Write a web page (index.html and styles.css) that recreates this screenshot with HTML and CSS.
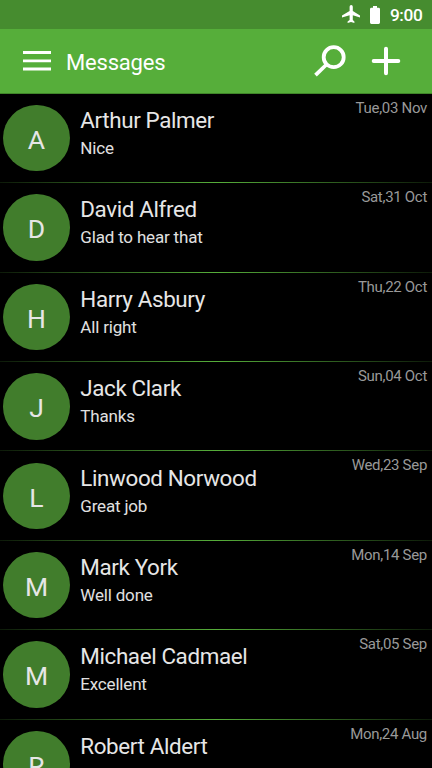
FILE: index.html
```html
<!DOCTYPE html>
<html lang="en">
<head>
<meta charset="utf-8">
<title>Messages</title>
<link rel="stylesheet" href="styles.css">
</head>
<body>
<div class="status">
  <svg class="plane" viewBox="0 0 18 19"><path d="M18 12.4v-1.9l-7.2-4.4V1.700a1.600 1.600 0 0 0-3.200 0v4.400L0 10.500v1.900l7.600-2.200v4.900l-2 1.400v1.600l3.400-1.100 3.400 1.100v-1.600l-1.600-1.400v-4.900z"/></svg>
  <svg class="battery" viewBox="0 0 10 18"><path d="M3 0h4v1.800h1.600Q10 1.800 10 3.200v13.400Q10 18 8.600 18H1.400Q0 18 0 16.600V3.200Q0 1.800 1.400 1.800H3z"/></svg>
  <span class="clock">9:00</span>
</div>
<header class="bar">
  <svg class="menu" viewBox="0 0 28 20"><path d="M0 1.500h28M0 9.800h28M0 18h28"/></svg>
  <h1 class="title">Messages</h1>
  <svg class="search" viewBox="0 0 32 32"><circle cx="19.700" cy="12.200" r="10"/><path d="M12 20 1.500 30.200"/></svg>
  <svg class="plus" viewBox="0 0 30 30"><path d="M15 2.700v24.600M2.700 15h24.600"/></svg>
</header>
<main class="list">
  <article class="row"><div class="avatar">A</div><div class="body"><h2 class="name">Arthur Palmer</h2><p class="text">Nice</p></div><time class="date">Tue,03 Nov</time></article>
  <article class="row"><div class="avatar">D</div><div class="body"><h2 class="name">David Alfred</h2><p class="text">Glad to hear that</p></div><time class="date">Sat,31 Oct</time></article>
  <article class="row"><div class="avatar">H</div><div class="body"><h2 class="name">Harry Asbury</h2><p class="text">All right</p></div><time class="date">Thu,22 Oct</time></article>
  <article class="row"><div class="avatar">J</div><div class="body"><h2 class="name">Jack Clark</h2><p class="text">Thanks</p></div><time class="date">Sun,04 Oct</time></article>
  <article class="row"><div class="avatar">L</div><div class="body"><h2 class="name">Linwood Norwood</h2><p class="text">Great job</p></div><time class="date">Wed,23 Sep</time></article>
  <article class="row"><div class="avatar">M</div><div class="body"><h2 class="name">Mark York</h2><p class="text">Well done</p></div><time class="date">Mon,14 Sep</time></article>
  <article class="row"><div class="avatar">M</div><div class="body"><h2 class="name">Michael Cadmael</h2><p class="text">Excellent</p></div><time class="date">Sat,05 Sep</time></article>
  <article class="row"><div class="avatar">R</div><div class="body"><h2 class="name">Robert Aldert</h2><p class="text">Agree</p></div><time class="date">Mon,24 Aug</time></article>
</main>
</body>
</html>
```
FILE: styles.css
```css
* { box-sizing: border-box; }
body {
  margin: 0;
  height: 768px;
  overflow: hidden;
  display: flex;
  flex-direction: column;
  background: #000;
  font-family: Roboto, sans-serif;
}
h1, h2, p { margin: 0; font-weight: 400; }
.status {
  flex: none;
  height: 29px;
  padding: 0 9.500px 0 0;
  display: flex;
  align-items: center;
  justify-content: flex-end;
  background: #468c2f;
  color: #fff;
}
.plane { width: 18px; height: 19px; fill: #fff; margin-right: 10px; }
.battery { width: 10px; height: 18px; fill: #fff; margin-right: 10px; }
.clock { font-size: 17.300px; font-weight: 500; line-height: 29px; padding-top: 1px; letter-spacing: -0.35px; }
.bar {
  flex: none;
  height: 65px;
  padding: 0 31px 0 23px;
  display: flex;
  align-items: center;
  background: #56ae3a;
  border-bottom: 1px solid #408629;
}
.bar svg { fill: none; stroke: #fff; flex: none; }
.menu { width: 28px; height: 20px; stroke-width: 2.8; }
.title { flex: 1; margin-left: 15px; font-size: 22px; line-height: 30px; padding-top: 3px; letter-spacing: -0.2px; color: #fff; }
.search { width: 32px; height: 32px; stroke-width: 3.8; margin-right: 25.500px; }
.plus { width: 30px; height: 30px; stroke-width: 4; stroke-linecap: round; }
.list { flex: 1; min-height: 0; overflow: hidden; }
.row {
  height: 89.4px;
  display: flex;
  align-items: flex-start;
  padding: 11px 5px 0 3.300px;
  background: linear-gradient(90deg, #0d1a09, #56ae3a 50%, #0d1a09) 0 100% / 100% 1.200px no-repeat;
}
.avatar {
  flex: none;
  width: 66.4px;
  height: 66.4px;
  border-radius: 50%;
  background: #417d2c;
  color: #e6e6e6;
  font-size: 26.500px;
  line-height: 69px;
  text-align: center;
}
.body { flex: 1; margin-left: 10.600px; }
.name { font-size: 22.400px; line-height: 31px; letter-spacing: -0.37px; color: #e6e6e6; white-space: nowrap; }
.text { margin-top: -1px; font-size: 17px; line-height: 26px; letter-spacing: -0.18px; color: #e0e0e0; }
.date { margin-top: -7.100px; font-size: 15px; line-height: 20px; letter-spacing: -0.3px; color: #999; white-space: nowrap; }
```
